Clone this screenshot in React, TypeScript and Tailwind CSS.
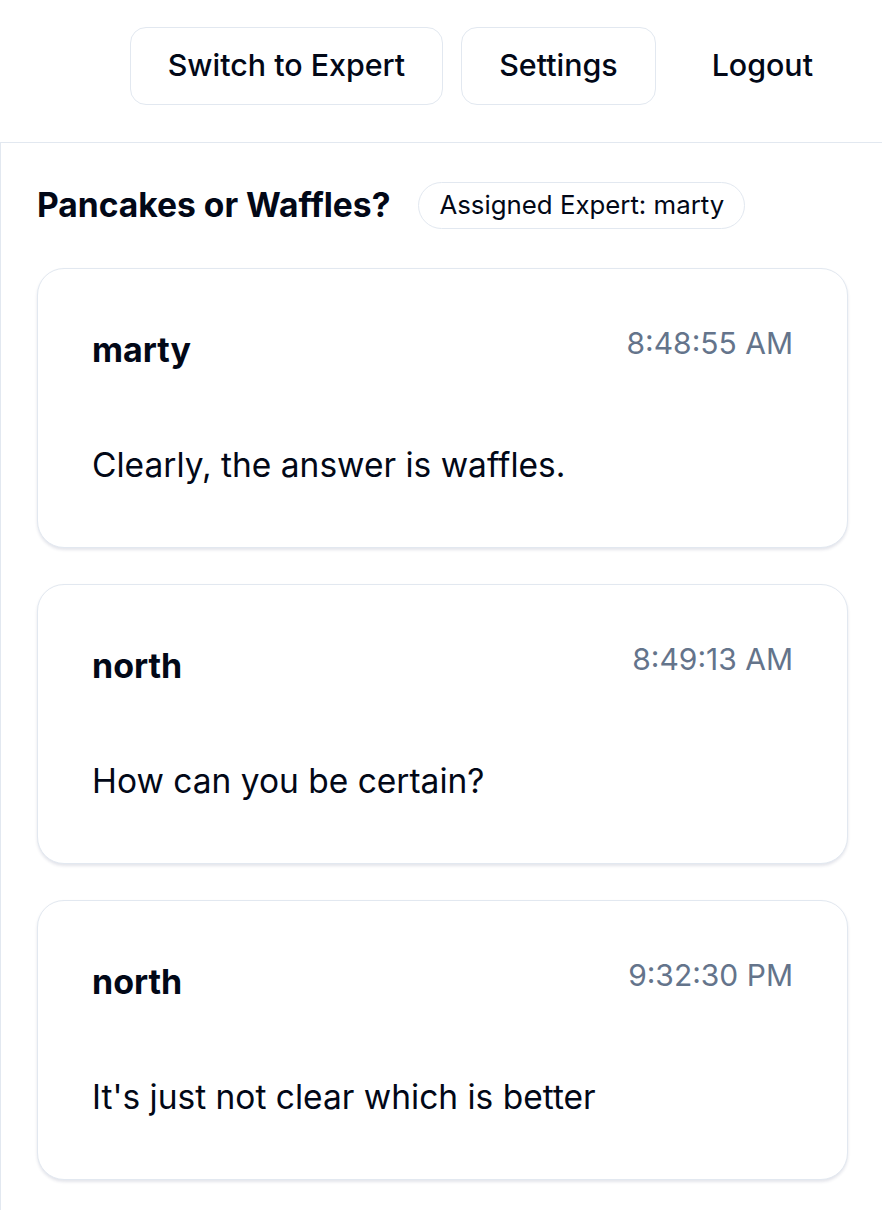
import React from "react";

const messages = [
  { name: "marty", time: "8:48:55 AM", text: "Clearly, the answer is waffles." },
  { name: "north", time: "8:49:13 AM", text: "How can you be certain?" },
  { name: "north", time: "9:32:30 PM", text: "It's just not clear which is better" },
];

export default function App() {
  return (
    <div
      className="min-h-[1210px] bg-white text-[#020817]"
      style={{ fontFamily: "Inter, 'Noto Sans', sans-serif" }}
    >
      <header className="flex justify-end items-center gap-[18px] pt-[27px] pb-[37px] pr-[31px] border-b border-[#e2e8f0]">
        <button className="h-[78px] px-[37px] rounded-[16px] border border-[#e2e8f0] bg-white text-[30.4px] font-medium">
          Switch to Expert
        </button>
        <button className="h-[78px] px-[37px] rounded-[16px] border border-[#e2e8f0] bg-white text-[30.4px] font-medium">
          Settings
        </button>
        <button className="h-[78px] px-[37px] rounded-[16px] border border-transparent bg-white text-[30.4px] font-medium">
          Logout
        </button>
      </header>
      <main className="border-l border-[#e2e8f0] pl-[36px] pr-[34px] pt-[38px] pb-[30px] min-h-[1067px]">
        <div className="flex items-center gap-[28px] mb-[39px]">
          <h1 className="text-[33.6px] leading-[48px] font-bold">Pancakes or Waffles?</h1>
          <span className="h-[47px] px-[20px] flex items-center rounded-full border border-[#e2e8f0] text-[25.8px]">
            Assigned Expert: marty
          </span>
        </div>
        <div className="flex flex-col gap-[36px]">
          {messages.map((m, i) => (
            <div
              key={i}
              className="rounded-[27px] border border-[#e2e8f0] bg-white shadow-[0_2px_3px_0_rgba(30,41,90,0.12)] px-[54px] pt-[57px] pb-[58px]"
            >
              <div className="flex justify-between items-start">
                <div className="text-[34px] leading-[48px] font-bold">{m.name}</div>
                <div className="text-[30px] leading-[34px] text-[#64748b]">{m.time}</div>
              </div>
              <p className="mt-[67px] text-[33.5px] leading-[48px]">{m.text}</p>
            </div>
          ))}
        </div>
      </main>
    </div>
  );
}
